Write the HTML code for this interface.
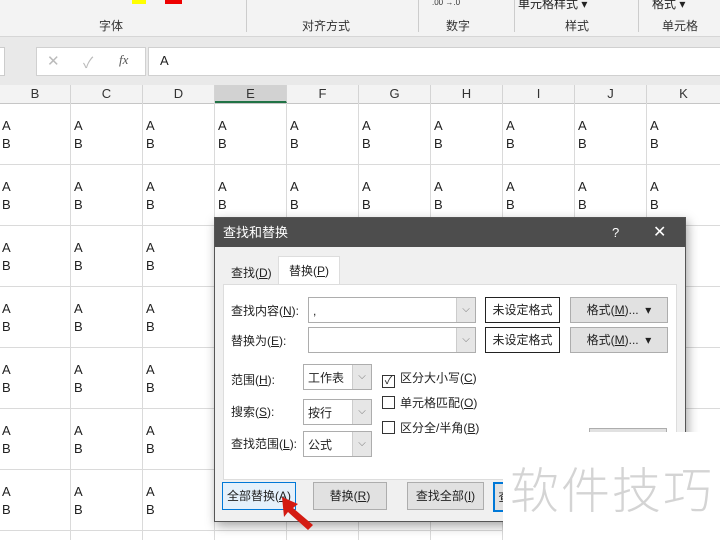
<!DOCTYPE html><html><head><meta charset="utf-8"><style>
body{margin:0;width:720px;height:540px;overflow:hidden;background:#fff;font-family:"Liberation Sans","Noto Sans CJK SC",sans-serif;position:relative;font-size:12px;color:#222}
.a{position:absolute}
.lab{position:absolute;top:17px;font-size:12px;color:#333}
.col{position:absolute;top:85px;height:18px;line-height:18px;text-align:center;font-size:13px;color:#333;border-right:1px solid #d4d4d4;background:#f3f3f3}
.vl{position:absolute;top:103px;bottom:0;width:1px;background:#dadada}
.hl{position:absolute;left:0;right:0;height:1px;background:#dadada}
.c{position:absolute;font-size:13px;line-height:18px;color:#222}
.btn{position:absolute;background:#e1e1e1;border:1px solid #adadad;text-align:center;font-size:12px;line-height:26px}
.inp{position:absolute;background:#fff;border:1px solid #adadad;height:24px}
.dd{position:absolute;right:0;top:0;bottom:0;width:18px;background:#e6e6e6;border-left:1px solid #ccc;color:#777;text-align:center;font-size:10px;line-height:24px}
.cb{display:inline-block;width:11px;height:11px;border:1px solid #333;vertical-align:-2px;margin-right:5px;font-size:11px;line-height:11px;text-align:center;background:#fff}
u{text-decoration:underline}
</style></head><body>
<div class="a" style="left:0;top:0;width:720px;height:36px;background:#f3f3f3;border-bottom:1px solid #d6d6d6"></div>
<div class="a" style="left:132px;top:0;width:14px;height:4px;background:#ff0"></div>
<div class="a" style="left:165px;top:0;width:17px;height:4px;background:#e00"></div>
<div class="lab" style="left:99px">字体</div>
<div class="lab" style="left:302px">对齐方式</div>
<div class="lab" style="left:446px">数字</div>
<div class="lab" style="left:565px">样式</div>
<div class="lab" style="left:662px">单元格</div>
<div class="a" style="left:518px;top:-5px;font-size:12px">单元格样式 ▾</div>
<div class="a" style="left:652px;top:-5px;font-size:12px">格式 ▾</div>
<div class="a" style="left:432px;top:-2px;font-size:8px;color:#333">.00 →.0</div>
<div class="a" style="left:246px;top:0;width:1px;height:32px;background:#ccc"></div>
<div class="a" style="left:418px;top:0;width:1px;height:32px;background:#ccc"></div>
<div class="a" style="left:514px;top:0;width:1px;height:32px;background:#ccc"></div>
<div class="a" style="left:638px;top:0;width:1px;height:32px;background:#ccc"></div>
<div class="a" style="left:0;top:37px;width:720px;height:48px;background:#e9e9e9"></div>
<div class="a" style="left:0;top:47px;width:4px;height:27px;background:#fff;border:1px solid #ccc;border-left:none"></div>
<div class="a" style="left:36px;top:47px;width:108px;height:27px;background:#fff;border:1px solid #d0d0d0"></div>
<div class="a" style="left:47px;top:52px;color:#bbb;font-size:15px">✕</div>
<div class="a" style="left:83px;top:52px;color:#bbb;font-size:15px">✓</div>
<div class="a" style="left:119px;top:52px;color:#555;font-size:13px;font-style:italic;font-family:'Liberation Serif',serif">fx</div>
<div class="a" style="left:148px;top:47px;width:572px;height:27px;background:#fff;border:1px solid #d0d0d0"></div>
<div class="a" style="left:160px;top:53px;font-size:13px">A</div>
<div class="col" style="left:0;width:70px">B</div><div class="col" style="left:71px;width:71px">C</div><div class="col" style="left:143px;width:71px">D</div>
<div class="col" style="left:215px;width:71px;background:#d2d2d2;border-bottom:2px solid #217346;height:16px">E</div>
<div class="col" style="left:287px;width:71px">F</div><div class="col" style="left:359px;width:71px">G</div><div class="col" style="left:431px;width:71px">H</div><div class="col" style="left:503px;width:71px">I</div><div class="col" style="left:575px;width:71px">J</div><div class="col" style="left:647px;width:73px">K</div>
<div class="a" style="left:0;top:103px;width:720px;height:1px;background:#c6c6c6"></div>
<div class="vl" style="left:70px"></div><div class="vl" style="left:142px"></div><div class="vl" style="left:214px"></div><div class="vl" style="left:286px"></div><div class="vl" style="left:358px"></div><div class="vl" style="left:430px"></div><div class="vl" style="left:502px"></div><div class="vl" style="left:574px"></div><div class="vl" style="left:646px"></div>
<div class="hl" style="top:164px"></div><div class="hl" style="top:225px"></div><div class="hl" style="top:286px"></div><div class="hl" style="top:347px"></div><div class="hl" style="top:408px"></div><div class="hl" style="top:469px"></div><div class="hl" style="top:530px"></div>
<div id="cells"></div>
<script>
var xs=[2,74,146,218,290,362,434,506,578,650],h='';
for(var r=0;r<7;r++)for(var i=0;i<xs.length;i++)h+='<div class="c" style="left:'+xs[i]+'px;top:'+(117+r*61)+'px">A<br>B</div>';
document.getElementById('cells').innerHTML=h;
</script>
<div class="a" style="left:214px;top:217px;width:470px;height:303px;background:#f0f0f0;border:1px solid #555;box-shadow:2px 4px 10px rgba(0,0,0,.35)">
<div class="a" style="left:0;top:0;width:470px;height:29px;background:#4d4d4d;color:#fff;font-size:13px;line-height:29px"><span style="margin-left:8px">查找和替换</span><span class="a" style="left:397px">?</span><span class="a" style="left:438px;font-size:16px">✕</span></div>
<div class="a" style="left:16px;top:46px;font-size:12px">查找(<u>D</u>)</div>
<div class="a" style="left:63px;top:38px;width:60px;height:28px;background:#fff;border:1px solid #ddd;border-bottom:none;text-align:center;line-height:28px">替换(<u>P</u>)</div>
<div class="a" style="left:8px;top:66px;width:452px;height:194px;background:#fff;border:1px solid #ddd"></div>
<div class="a" style="left:16px;top:84px">查找内容(<u>N</u>):</div>
<div class="inp" style="left:93px;top:79px;width:166px"><span style="position:absolute;left:4px;top:6px">,</span><div class="dd">⌵</div></div>
<div class="a" style="left:270px;top:79px;width:73px;height:24px;border:1px solid #222;background:#fff;text-align:center;line-height:24px">未设定格式</div>
<div class="btn" style="left:355px;top:79px;width:96px;height:24px;line-height:24px">格式(<u>M</u>)... &nbsp;▾</div>
<div class="a" style="left:16px;top:114px">替换为(<u>E</u>):</div>
<div class="inp" style="left:93px;top:109px;width:166px"><div class="dd">⌵</div></div>
<div class="a" style="left:270px;top:109px;width:73px;height:24px;border:1px solid #222;background:#fff;text-align:center;line-height:24px">未设定格式</div>
<div class="btn" style="left:355px;top:109px;width:96px;height:24px;line-height:24px">格式(<u>M</u>)... &nbsp;▾</div>
<div class="a" style="left:16px;top:153px">范围(<u>H</u>):</div>
<div class="inp" style="left:88px;top:146px;width:67px"><span style="position:absolute;left:4px;top:4px">工作表</span><div class="dd">⌵</div></div>
<div class="a" style="left:16px;top:185px">搜索(<u>S</u>):</div>
<div class="inp" style="left:88px;top:181px;width:67px"><span style="position:absolute;left:4px;top:4px">按行</span><div class="dd">⌵</div></div>
<div class="a" style="left:16px;top:217px">查找范围(<u>L</u>):</div>
<div class="inp" style="left:88px;top:213px;width:67px"><span style="position:absolute;left:4px;top:4px">公式</span><div class="dd">⌵</div></div>
<div class="a" style="left:167px;top:151px"><span class="cb">✓</span>区分大小写(<u>C</u>)</div>
<div class="a" style="left:167px;top:176px"><span class="cb"></span>单元格匹配(<u>O</u>)</div>
<div class="a" style="left:167px;top:201px"><span class="cb"></span>区分全/半角(<u>B</u>)</div>
<div class="btn" style="left:374px;top:210px;width:76px;height:20px"></div>
<div class="btn" style="left:7px;top:264px;width:72px;height:26px;background:#e5f1fb;border-color:#0078d7">全部替换(<u>A</u>)</div>
<div class="btn" style="left:98px;top:264px;width:72px;height:26px">替换(<u>R</u>)</div>
<div class="btn" style="left:192px;top:264px;width:75px;height:26px">查找全部(<u>I</u>)</div>
<div class="btn" style="left:278px;top:264px;width:40px;height:26px;border:2px solid #0078d7;text-align:left">&nbsp;查</div>
</div>
<svg class="a" style="left:278px;top:495px" width="40" height="40"><polygon points="4,2 20,9 15,13 35,30 30,35 10,17 6,22" fill="#d41b12"/></svg>
<div class="a" style="left:503px;top:432px;width:217px;height:108px;background:#fff"></div>
<div class="a" style="left:510px;top:452px;font-size:49px;color:#d4d4d4;letter-spacing:2px;font-family:'Noto Sans CJK SC',sans-serif;font-weight:300">软件技巧</div>
</body></html>
